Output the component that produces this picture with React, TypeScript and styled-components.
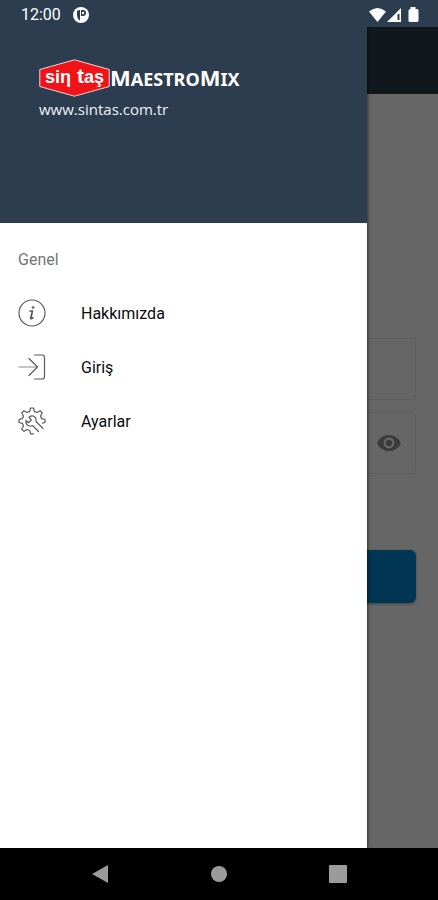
import React from "react";
import styled, { createGlobalStyle } from "styled-components";

const GlobalStyle = createGlobalStyle`
  *, *::before, *::after { box-sizing: border-box; }
  body { margin: 0; background: #000; font-family: Roboto, "Liberation Sans", sans-serif; }
`;

const Screen = styled.div`
  display: flex;
  flex-direction: column;
  min-height: 100vh;
`;

const StatusBar = styled.header`
  position: relative;
  z-index: 1;
  display: flex;
  align-items: center;
  justify-content: space-between;
  height: 27px;
  padding: 2px 18px 0 21px;
  background: #2c3d50;
  color: #fff;
  font-size: 16px;
`;

const StatusGroup = styled.div`
  display: flex;
  align-items: center;
  gap: 12px;
`;

const Stage = styled.div`
  position: relative;
  display: flex;
  flex: 1;
`;

const Page = styled.main`
  display: flex;
  flex: 1;
  flex-direction: column;
  background: #fff;
`;

const AppBar = styled.div`
  height: 67px;
  background: #2b3e4a;
`;

const LoginForm = styled.form`
  display: flex;
  flex-direction: column;
  padding: 244px 22px 0;
`;

const Field = styled.div`
  display: flex;
  align-items: center;
  height: 62px;
  margin-bottom: 12px;
  padding: 0 13px;
  border: 1px solid #ececec;
  border-radius: 3px;
`;

const FieldInput = styled.input`
  flex: 1;
  min-width: 0;
  border: 0;
  outline: 0;
  background: transparent;
  font: inherit;
`;

const IconButton = styled.button`
  display: flex;
  padding: 0;
  border: 0;
  background: transparent;
  color: #939393;
`;

const SubmitButton = styled.button`
  height: 53px;
  margin-top: 64px;
  border: 0;
  border-radius: 6px;
  background: #0088d0;
  box-shadow: 0 1px 3px rgba(0, 0, 0, 0.4);
`;

const Scrim = styled.div`
  position: absolute;
  inset: 0;
  background: rgba(0, 0, 0, 0.6);
`;

const Drawer = styled.aside`
  position: absolute;
  inset: 0 71px 0 0;
  background: #fff;
  box-shadow: 1px 0 3px rgba(0, 0, 0, 0.5);
`;

const DrawerHeader = styled.div`
  height: 196px;
  padding: 32px 39px;
  background: #2c3d50;
  color: #fff;
`;

const Brand = styled.div`
  display: flex;
  align-items: center;
`;

const BrandName = styled.span`
  font: 700 22px/36px "Noto Sans", "Open Sans", sans-serif;
`;

const SmallCaps = styled.span`
  font-size: 18px;
`;

const SiteLink = styled.a`
  display: block;
  color: #f0f3f6;
  font: 400 15px/24px "Open Sans", "Noto Sans", sans-serif;
  text-decoration: none;
`;

const SectionTitle = styled.h2`
  margin: 0;
  padding: 25px 18px 14px;
  color: #757575;
  font-size: 16px;
  font-weight: 400;
  line-height: 24px;
`;

const MenuLink = styled.a`
  display: flex;
  align-items: center;
  gap: 35px;
  height: 54px;
  padding: 0 18px;
  color: #0c0c0c;
  font-size: 16px;
  text-decoration: none;
`;

const NavBar = styled.nav`
  display: flex;
  align-items: center;
  justify-content: space-around;
  height: 52px;
  padding: 0 40px;
  background: #000;
`;

const NavButton = styled.button`
  display: flex;
  padding: 0;
  border: 0;
  background: transparent;
  color: #9b9b9b;
`;

const Logo = () => (
  <svg width="71" height="38" viewBox="0 0 71 38" role="img" aria-label="sintaş">
    <path d="M35.5 .8 70.2 10.5V27.5L35.5 37.2 .8 27.5V10.5Z" fill="#f01418" stroke="#f3d5d8" strokeWidth="1" />
    <g fill="#fff" fontFamily="Liberation Sans, sans-serif" fontWeight="700" fontSize="18">
      <text x="6" y="24">siη</text>
      <text x="38" y="24"><tspan fontSize="21">t</tspan>aş</text>
    </g>
  </svg>
);

const line = { fill: "none", stroke: "#5a5a5a", strokeWidth: 1.2, strokeLinecap: "round", strokeLinejoin: "round" } as const;

const InfoIcon = () => (
  <svg width="28" height="28" viewBox="0 0 28 28" aria-hidden="true" {...line}>
    <circle cx="14" cy="14" r="13" />
    <path d="M12 12h2.5L12.800 19q-.3 1.500 2-.2" strokeWidth="1.7" />
    <circle cx="15" cy="8.5" r="1" fill="#5a5a5a" strokeWidth=".6" />
  </svg>
);

const LoginIcon = () => (
  <svg width="28" height="28" viewBox="0 0 28 28" aria-hidden="true" {...line}>
    <path d="M.8 14H19" stroke="#8a8a8a" />
    <path d="M11 5.500 19.500 14 11 22.500M16.500 2H24q2.500 0 2.500 2.500v19q0 2.500-2.500 2.500h-7.500" />
  </svg>
);

const SettingsIcon = () => (
  <svg width="28" height="28" viewBox="0 0 28 28" aria-hidden="true" {...line}>
    <path d="M15.500 26.800H12.500L11.800 23.500 9 22.500 6 24.300 3.700 22 5.500 19 4.400 16.300 1 15.500V12.500L4.400 11.700 5.500 9 3.700 6 6 3.700 9 5.500 11.700 4.400 12.500 1H15.500L16.300 4.400 19 5.500 22 3.700 24.300 6 22.500 9 23.600 11.700 27 12.500V15.500L24.500 16.200" />
    <path d="M8 13.500 10.500 15.800 13.200 13.200 11 10.200Q14.500 7.500 17.300 10.500 18.500 12 18 14.500L25 21.500M8 13.500Q7.500 17.500 10.500 18.800 12.500 19.500 14.500 18.500L20.500 24.500" />
  </svg>
);

const EyeIcon = () => (
  <svg width="26" height="26" viewBox="0 0 24 24" fill="currentColor" aria-hidden="true">
    <path d="M12 4.500C7 4.500 2.730 7.610 1 12c1.730 4.390 6 7.500 11 7.500s9.270-3.110 11-7.500c-1.730-4.390-6-7.500-11-7.500zM12 17c-2.760 0-5-2.240-5-5s2.240-5 5-5 5 2.240 5 5-2.240 5-5 5zm0-8c-1.660 0-3 1.340-3 3s1.340 3 3 3 3-1.340 3-3-1.340-3-3-3z" />
  </svg>
);

const NotificationIcon = () => (
  <svg width="16" height="16" viewBox="0 0 16 16" aria-hidden="true">
    <circle cx="8" cy="8" r="8" fill="#fff" />
    <path d="M4 4Q5 3 7 3V13H6Q4 11 4 8Z" fill="#2c3d50" />
    <path d="M8 3H10A3 3 0 0 1 10 9H8Z" fill="#2c3d50" />
    <circle cx="10" cy="6" r="1.2" fill="#fff" />
  </svg>
);

const SignalIcons = () => (
  <svg width="51" height="16" viewBox="0 0 51 16" fill="#fff" aria-hidden="true">
    <path d="M0 4.500Q8.500-2.500 17 4.500L8.500 15Z" />
    <path d="M32 1V15H18Z" />
    <path d="M28.500 7H30.500V13H28.500Z" fill="#2c3d50" />
    <path d="M41.500 0H46.500V2H48Q49.500 2 49.500 3.500V13.500Q49.500 15 48 15H41Q39.500 15 39.500 13.500V3.500Q39.500 2 41.500 2Z" />
  </svg>
);

const menu = [
  { label: "Hakkımızda", Icon: InfoIcon },
  { label: "Giriş", Icon: LoginIcon },
  { label: "Ayarlar", Icon: SettingsIcon },
];

const navItems = [
  { label: "Geri", shape: <path d="M1 9 17 0V18Z" /> },
  { label: "Ana ekran", shape: <circle cx="9" cy="9" r="8" /> },
  { label: "Son uygulamalar", shape: <rect x="0" y="0" width="18" height="18" rx="1" /> },
];

export default function App() {
  return (
    <>
      <GlobalStyle />
      <Screen>
        <StatusBar>
          <StatusGroup>
            <span>12:00</span>
            <NotificationIcon />
          </StatusGroup>
          <SignalIcons />
        </StatusBar>
        <Stage>
          <Page inert>
            <AppBar />
            <LoginForm>
              <Field>
                <FieldInput type="text" aria-label="Kullanıcı adı" />
              </Field>
              <Field>
                <FieldInput type="password" aria-label="Şifre" />
                <IconButton type="button" aria-label="Şifreyi göster">
                  <EyeIcon />
                </IconButton>
              </Field>
              <SubmitButton type="button" aria-label="Giriş" />
            </LoginForm>
          </Page>
          <Scrim />
          <Drawer>
            <DrawerHeader>
              <Brand>
                <Logo />
                <BrandName>
                  M<SmallCaps>AESTRO</SmallCaps>M<SmallCaps>IX</SmallCaps>
                </BrandName>
              </Brand>
              <SiteLink href="#site">www.sintas.com.tr</SiteLink>
            </DrawerHeader>
            <SectionTitle>Genel</SectionTitle>
            {menu.map(({ label, Icon }) => (
              <MenuLink key={label} href={"#" + label}>
                <Icon />
                {label}
              </MenuLink>
            ))}
          </Drawer>
        </Stage>
        <NavBar>
          {navItems.map(({ label, shape }) => (
            <NavButton key={label} type="button" aria-label={label}>
              <svg width="18" height="18" viewBox="0 0 18 18" fill="currentColor" aria-hidden="true">
                {shape}
              </svg>
            </NavButton>
          ))}
        </NavBar>
      </Screen>
    </>
  );
}
